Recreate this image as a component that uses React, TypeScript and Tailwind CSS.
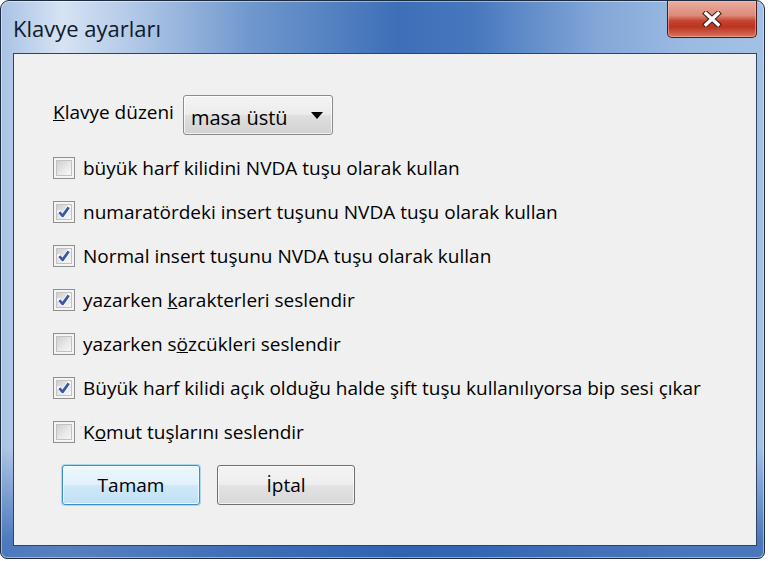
import React from 'react';

const rows: { checked: boolean; text: React.ReactNode }[] = [
  { checked: false, text: 'büyük harf kilidini NVDA tuşu olarak kullan' },
  { checked: true, text: 'numaratördeki insert tuşunu NVDA tuşu olarak kullan' },
  { checked: true, text: 'Normal insert tuşunu NVDA tuşu olarak kullan' },
  { checked: true, text: <>yazarken <u>k</u>arakterleri seslendir</> },
  { checked: false, text: <>yazarken s<u>ö</u>zcükleri seslendir</> },
  { checked: true, text: 'Büyük harf kilidi açık olduğu halde şift tuşu kullanılıyorsa bip sesi çıkar' },
  { checked: false, text: <>K<u>o</u>mut tuşlarını seslendir</> },
];

function CheckBox({ checked }: { checked: boolean }) {
  return (
    <span className="flex h-[22px] w-[22px] shrink-0 border border-[#8e8f8f] bg-[#f4f4f4] p-[2px]">
      <span className="relative h-full w-full border border-[#c2c2c2] bg-[linear-gradient(135deg,#cfcfcf_0%,#e8e8e8_55%,#f8f8f8_100%)]">
        {checked && (
          <svg viewBox="0 0 16 16" className="absolute inset-0 h-full w-full">
            <path d="M2.6 8.2 L6.4 12.4 L13.4 2.6" fill="none" stroke="#ffffff" strokeWidth="4.8" strokeLinecap="round" strokeLinejoin="round" />
            <path d="M2.6 8.2 L6.4 12.4 L13.4 2.6" fill="none" stroke="#3a58a6" strokeWidth="3.2" strokeLinejoin="round" />
          </svg>
        )}
      </span>
    </span>
  );
}

function CloseButton() {
  return (
    <div className="flex h-[37px] w-[90px] items-center justify-center rounded-b-[5px] border border-t-0 border-[#4a1c14] bg-[linear-gradient(180deg,#e9ada0_0%,#dc8b7a_40%,#c84430_55%,#bb3320_72%,#d9745f_100%)] shadow-[inset_0_0_0_1px_rgba(255,210,200,0.45)]">
      <svg viewBox="0 0 20 16" className="h-[16px] w-[20px]">
        <path d="M4 2.5 L16 13.5 M16 2.5 L4 13.5" stroke="#3b1a14" strokeWidth="5.4" strokeLinecap="square" />
        <path d="M4 2.5 L16 13.5 M16 2.5 L4 13.5" stroke="#ffffff" strokeWidth="3.4" strokeLinecap="square" />
      </svg>
    </div>
  );
}

export default function App() {
  return (
    <div className="h-[561px] w-[770px] bg-white font-['Segoe_UI','Open_Sans',sans-serif] text-black">
      <div className="flex h-[559px] w-[765px] flex-col rounded-t-[9px] rounded-b-[7px] border border-[#1c2b40] bg-[linear-gradient(180deg,transparent_80%,rgba(45,95,175,0.75)_97%),linear-gradient(90deg,#a9c2e5_0%,#d6e3f3_8%,#b3c9e8_17%,#6f97cd_33%,#3d6fb8_52%,#4778be_62%,#82a6d8_78%,#9cbbe2_90%,#a4c0e4_100%)] pl-[12px] pr-[7px] pb-[12px] shadow-[inset_0_0_0_1px_rgba(255,255,255,0.45)]">
        <div className="flex h-[52px] shrink-0 items-start justify-between">
          <span className="pt-[14px] text-[22px] leading-[26px] text-[#0f1a2a]">Klavye ayarları</span>
          <CloseButton />
        </div>
        <div className="flex-1 border border-[#2c4566] bg-[#f0f0f0] pl-[39px] pt-[41px]">
          <div className="flex items-start text-[19px]">
            <span className="pt-[4px] leading-[26px]">
              <u>K</u>lavye düzeni
            </span>
            <div className="ml-[9px] flex h-[40px] w-[150px] items-center justify-between rounded-[3px] border border-[#8b8b8b] bg-[linear-gradient(180deg,#f4f4f4_0%,#ececec_48%,#dfdfdf_52%,#d2d2d2_100%)] pl-[7px] pr-[9px] pt-[6px] shadow-[inset_0_0_0_1px_rgba(255,255,255,0.7)]">
              <span className="text-[20px] leading-[26px]">masa üstü</span>
              <span className="mb-[5px] h-0 w-0 border-x-[6px] border-t-[7px] border-x-transparent border-t-black" />
            </div>
          </div>
          <div className="mt-[11px] flex flex-col">
            {rows.map((r, i) => (
              <div key={i} className="flex h-[44px] items-center gap-[8px] text-[19px]">
                <CheckBox checked={r.checked} />
                <span className="leading-[26px]">{r.text}</span>
              </div>
            ))}
          </div>
          <div className="ml-[9px] mt-[11px] flex gap-[17px] text-[19px]">
            <button className="h-[40px] w-[138px] rounded-[3px] border border-[#3c8fc8] bg-[linear-gradient(180deg,#edf7fd_0%,#e1f1fb_48%,#cfe8f8_52%,#c0e0f4_100%)] leading-[26px] shadow-[0_0_0_1px_rgba(120,200,240,0.6),inset_0_0_0_1px_rgba(255,255,255,0.7)]">
              Tamam
            </button>
            <button className="h-[40px] w-[138px] rounded-[3px] border border-[#707070] bg-[linear-gradient(180deg,#f4f4f4_0%,#eeeeee_48%,#e2e2e2_52%,#d8d8d8_100%)] leading-[26px] shadow-[inset_0_0_0_1px_rgba(255,255,255,0.7)]">
              İptal
            </button>
          </div>
        </div>
      </div>
    </div>
  );
}
